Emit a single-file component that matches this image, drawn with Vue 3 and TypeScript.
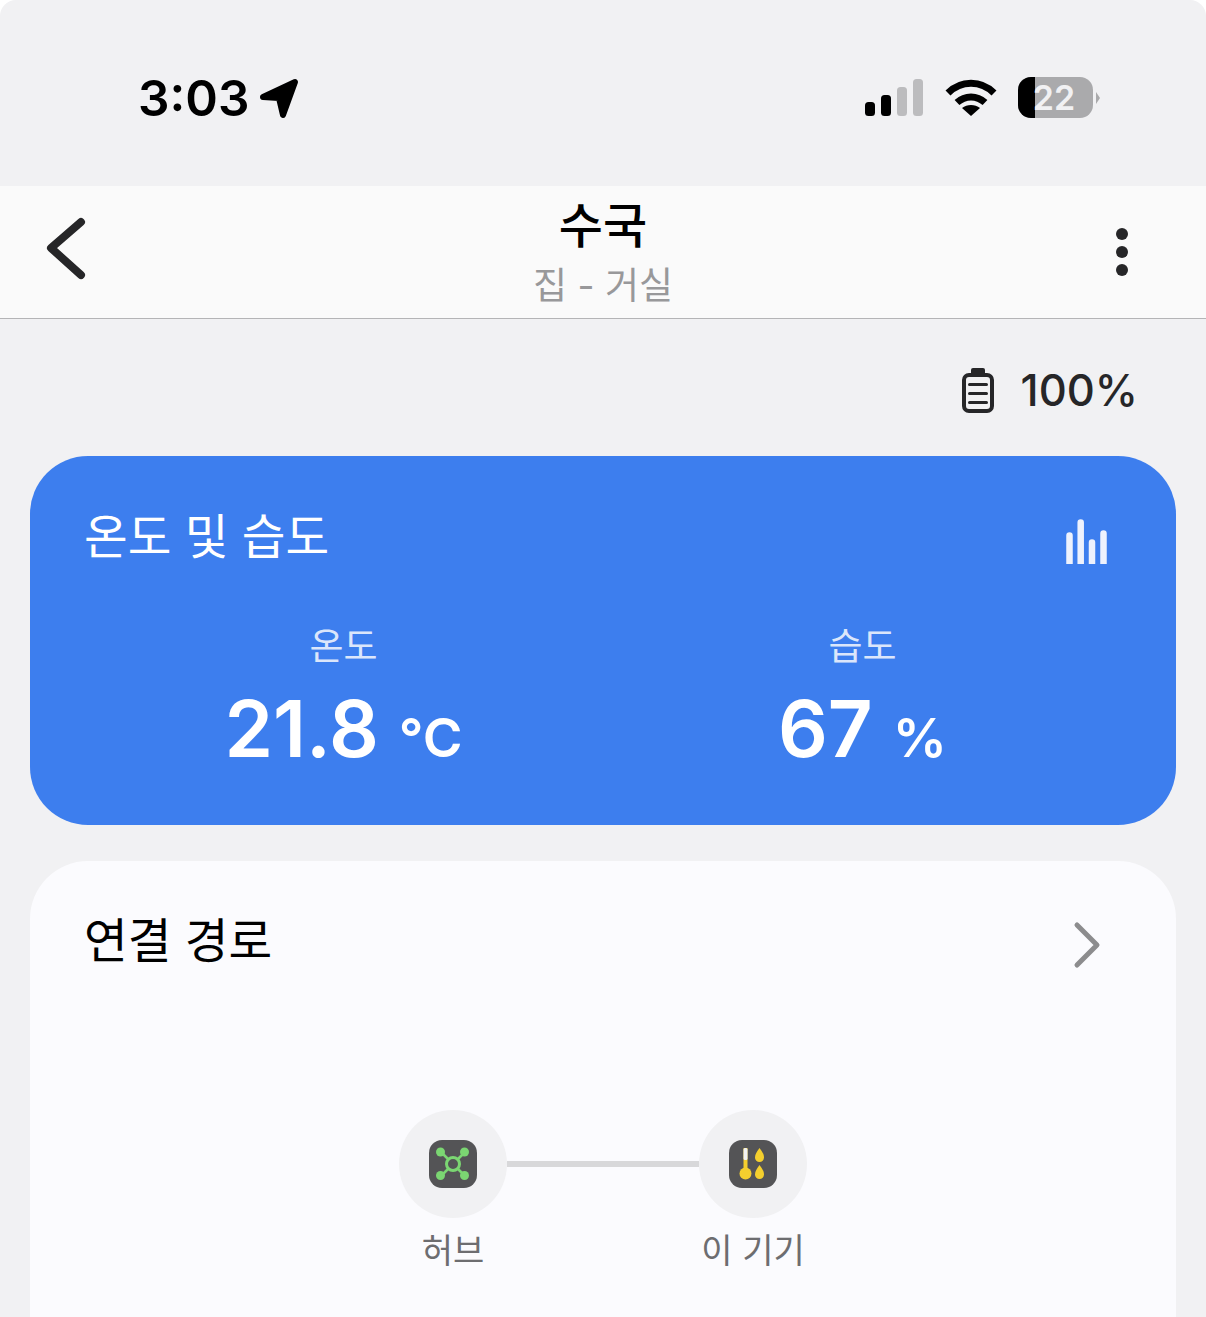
<script setup lang="ts">
interface Metric {
  label: string
  value: string
  unit: string
}

const metrics: Metric[] = [
  { label: '온도', value: '21.8', unit: '°C' },
  { label: '습도', value: '67', unit: '%' },
]
</script>

<template>
  <div class="screen">
    <header class="status">
      <div class="status-left">
        <span class="time">3:03</span>
        <svg class="loc" width="42" height="42" viewBox="0 0 42 42">
          <path d="M5 20 37 5 25 38 21 21Z" fill="#000" stroke="#000" stroke-width="6" stroke-linejoin="round" />
        </svg>
      </div>
      <div class="status-right">
        <svg width="58" height="37" viewBox="0 0 58 37">
          <rect x="0" y="23" width="10" height="14" rx="3.500" fill="#000" />
          <rect x="16" y="16" width="10" height="21" rx="3.500" fill="#000" />
          <rect x="32" y="8" width="10" height="29" rx="3.500" fill="#bcbcbe" />
          <rect x="48" y="0" width="10" height="37" rx="3.500" fill="#bcbcbe" />
        </svg>
        <svg class="wifi" width="52" height="38" viewBox="0 0 52 38">
          <path d="M3 14C16 1 36 1 49 14M12 23.500C20 16 32 16 40 23.500" fill="none" stroke="#000" stroke-width="7" />
          <path d="M26 37 17 29C22 25 30 25 35 29Z" fill="#000" />
        </svg>
        <div class="cell">
          <div class="cell-body"><div class="cell-fill"></div><span class="cell-num">22</span></div>
          <i class="cell-tip"></i>
        </div>
      </div>
    </header>

    <nav class="nav">
      <svg class="nav-back" width="40" height="64" viewBox="0 0 40 64">
        <path d="M35 6 5 32 35 59" fill="none" stroke="#262628" stroke-width="8" stroke-linecap="round" stroke-linejoin="round" />
      </svg>
      <div class="nav-title">
        <div class="title">수국</div>
        <div class="sub">집 - 거실</div>
      </div>
      <div class="nav-more"><i></i><i></i><i></i></div>
    </nav>

    <div class="power">
      <svg width="34" height="46" viewBox="0 0 34 46">
        <rect x="10" y="1" width="14" height="9" rx="2" fill="#262628" />
        <rect x="3" y="8" width="28" height="36" rx="5" fill="none" stroke="#262628" stroke-width="4" />
        <path d="M8.500 17.500h17M8.500 26.500h17M8.500 35.500h17" stroke="#262628" stroke-width="3" stroke-linecap="round" />
      </svg>
      <span>100%</span>
    </div>

    <section class="card blue">
      <div class="blue-head">
        <h2>온도 및 습도</h2>
        <svg class="chart" width="42" height="45" viewBox="0 0 42 45">
          <path d="M3.500 50V16.500M14.700 50V3.500M26 50V23.500M37.500 50V14.500" stroke="#eef2fd" stroke-width="6.500" stroke-linecap="round" />
        </svg>
      </div>
      <div class="metrics">
        <div v-for="m in metrics" :key="m.label" class="metric">
          <div class="metric-label">{{ m.label }}</div>
          <div class="metric-value">{{ m.value }}<span>{{ m.unit }}</span></div>
        </div>
      </div>
    </section>

    <section class="card route">
      <div class="route-head">
        <h2>연결 경로</h2>
        <svg class="more" width="30" height="48" viewBox="0 0 30 48">
          <path d="M5 4 25 24 5 44" fill="none" stroke="#8c8c8e" stroke-width="5" stroke-linecap="round" stroke-linejoin="round" />
        </svg>
      </div>
      <div class="path">
        <div class="node">
          <div class="disc">
            <svg width="48" height="48" viewBox="0 0 48 48">
              <rect width="48" height="48" rx="13" fill="#545456" />
              <path d="M12 12 36 36M36 12 12 36" stroke="#7bd672" stroke-width="2.500" />
              <circle cx="24" cy="24" r="6.500" fill="#545456" stroke="#7bd672" stroke-width="3" />
              <circle cx="11.500" cy="12" r="4.500" fill="#7bd672" />
              <circle cx="35.500" cy="12" r="4.500" fill="#7bd672" />
              <circle cx="11.500" cy="35.500" r="4.500" fill="#7bd672" />
              <circle cx="35.500" cy="35.500" r="4.500" fill="#7bd672" />
            </svg>
          </div>
          <span>허브</span>
        </div>
        <div class="line"></div>
        <div class="node">
          <div class="disc">
            <svg width="48" height="48" viewBox="0 0 48 48">
              <rect width="48" height="48" rx="13" fill="#545456" />
              <rect x="14.500" y="8" width="4" height="26" fill="#f4cf2e" />
              <rect x="14.500" y="8" width="4" height="12" rx="1.500" fill="#f2f2f2" />
              <circle cx="16.500" cy="33.500" r="6" fill="#f4cf2e" />
              <path d="M30.500 8C33.500 12 35 14.500 35 17.500A4.500 4.500 0 0 1 26 17.500C26 14.500 27.500 12 30.500 8Z" fill="#f4cf2e" />
              <path d="M30.500 25C33.500 29 35 31.500 35 34.500A4.500 4.500 0 0 1 26 34.500C26 31.500 27.500 29 30.500 25Z" fill="#f4cf2e" />
            </svg>
          </div>
          <span>이 기기</span>
        </div>
      </div>
    </section>
  </div>
</template>

<style>
body {
  background: #fff;
}
</style>

<style scoped>
.screen {
  height: 1317px;
  overflow: hidden;
  background: #f1f1f3;
  border-radius: 16px 16px 0 0;
  font-family: "Inter", "Noto Sans CJK KR", sans-serif;
}

.status {
  height: 186px;
  box-sizing: border-box;
  padding: 68px 106px 0 138px;
  display: flex;
  justify-content: space-between;
  align-items: flex-start;
}

.status-left {
  display: flex;
  align-items: center;
  gap: 9px;
}

.time {
  font-size: 49.500px;
  line-height: 60px;
  font-weight: 600;
  color: #000;
}

.status-right {
  display: flex;
  align-items: center;
  gap: 23px;
  padding-top: 9px;
}

.wifi {
  margin-left: -1px;
  margin-right: -2px;
}

.cell {
  display: flex;
  align-items: center;
  gap: 3px;
}

.cell-body {
  position: relative;
  width: 75px;
  height: 41px;
  box-sizing: border-box;
  padding-right: 3px;
  border-radius: 13px;
  background: #aaaaac;
  overflow: hidden;
  text-align: center;
}

.cell-fill {
  position: absolute;
  left: 0;
  top: 0;
  bottom: 0;
  width: 17px;
  background: #000;
}

.cell-num {
  position: relative;
  font-size: 34px;
  line-height: 41px;
  font-weight: 600;
  color: #f1f1f3;
}

.cell-tip {
  width: 0;
  height: 0;
  border-left: 4px solid #aaaaac;
  border-top: 6px solid transparent;
  border-bottom: 6px solid transparent;
}

.nav {
  height: 133px;
  box-sizing: border-box;
  border-bottom: 1px solid #b4b4b6;
  background: #fafafa;
  display: grid;
  grid-template-columns: 1fr auto 1fr;
  align-items: center;
}

.nav-back {
  margin-left: 46px;
  margin-bottom: 8px;
}

.nav-title {
  text-align: center;
  padding-top: 3px;
}

.title {
  font-size: 48px;
  line-height: 58px;
  font-weight: 500;
  color: #000;
}

.sub {
  margin-top: 6px;
  font-size: 37px;
  line-height: 50px;
  color: #98989a;
}

.nav-more {
  justify-self: end;
  margin-right: 78px;
  display: flex;
  flex-direction: column;
  gap: 6px;
}

.nav-more i {
  width: 12px;
  height: 12px;
  border-radius: 50%;
  background: #262628;
}

.power {
  height: 137px;
  box-sizing: border-box;
  padding: 4px 68px 0 0;
  display: flex;
  align-items: center;
  justify-content: flex-end;
  gap: 26px;
}

.power span {
  font-size: 43.500px;
  font-weight: 500;
  color: #262628;
}

.card {
  margin: 0 30px;
  border-radius: 58px;
}

.blue {
  height: 369px;
  background: #3d7eee;
  color: #fff;
  padding: 51px 54px 0 54px;
  box-sizing: border-box;
}

.blue-head {
  display: flex;
  justify-content: space-between;
  align-items: center;
  margin-right: 14px;
}

.chart {
  margin-top: 9px;
}

h2 {
  margin: 0;
  font-size: 47.500px;
  line-height: 60px;
  font-weight: 400;
}

.metrics {
  display: grid;
  grid-template-columns: 1fr 1fr;
  margin-top: 58px;
}

.metric {
  text-align: center;
}

.metric-label {
  font-size: 37px;
  line-height: 44px;
  color: #dbe6fb;
}

.metric-value {
  margin-top: 15px;
  font-size: 78px;
  line-height: 90px;
  font-weight: 600;
}

.metric-value span {
  margin-left: 20px;
  font-size: 54px;
  font-weight: 600;
}

.route {
  margin-top: 36px;
  height: 600px;
  background: #fbfbfe;
  padding: 50px 74px 0 54px;
}

.route-head {
  display: flex;
  justify-content: space-between;
  align-items: center;
  color: #000;
}

.more {
  margin-top: 8px;
}

.path {
  display: flex;
  justify-content: center;
  align-items: flex-start;
  margin-top: 139px;
  margin-right: -20px;
}

.node {
  width: 108px;
  display: flex;
  flex-direction: column;
  align-items: center;
}

.node span {
  margin-top: 8px;
  font-size: 34px;
  line-height: 50px;
  color: #6d6d70;
  white-space: nowrap;
}

.disc {
  width: 108px;
  height: 108px;
  border-radius: 50%;
  background: #f1f1f3;
  display: flex;
  align-items: center;
  justify-content: center;
}

.line {
  width: 192px;
  height: 6px;
  margin-top: 51px;
  background: #d8d8da;
}
</style>
